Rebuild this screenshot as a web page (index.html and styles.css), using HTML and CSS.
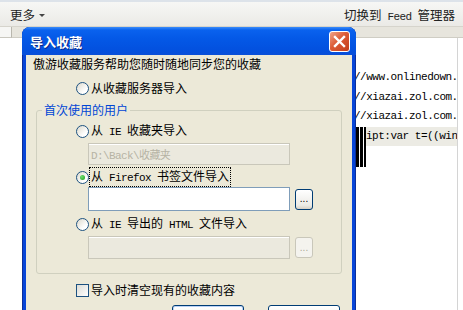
FILE: index.html
```html
<!DOCTYPE html>
<html>
<head>
    <title>导入收藏</title>
    <link rel="stylesheet" href="styles.css">
</head>
<body>
    <div class="toolbar">
        <span class="more">更多<i class="caret"></i></span>
        <span>切换到<span class="mono"> Feed </span>管理器</span>
    </div>

    <div class="strip">
        <div class="strip-box"></div>
        <div class="strip-rest"></div>
    </div>

    <div class="content">
        <div class="code">
            <div class="line">//www.onlinedown.</div>
            <div class="line">//xiazai.zol.com.</div>
            <div class="line">//xiazai.zol.com.</div>
            <div class="line current">ipt:var t=((win</div>
        </div>
        <div class="caret-bars"></div>
    </div>

    <div class="dialog">
        <div class="titlebar">
            <span class="title">导入收藏</span>
            <span class="close">
                <svg width="13" height="13" viewBox="0 0 13 13">
                    <path d="M2 2 L11 11 M11 2 L2 11" stroke="#fff" stroke-width="2.4" stroke-linecap="square"/>
                </svg>
            </span>
        </div>

        <div class="dlg-body">
            <div class="intro">傲游收藏服务帮助您随时随地同步您的收藏</div>

            <div class="opt top-opt">
                <span class="radio"></span>
                <span class="txt">从收藏服务器导入</span>
            </div>

            <fieldset>
                <legend>首次使用的用户</legend>

                <div class="opt first">
                    <span class="radio"></span>
                    <span class="txt">从<span class="mono"> IE </span>收藏夹导入</span>
                </div>
                <div class="field">
                    <input type="text" class="box off tall22" value="D:\Back\收藏夹" disabled>
                </div>

                <div class="opt gap3">
                    <span class="radio checked"></span>
                    <span class="txt focus">从<span class="mono"> Firefox </span>书签文件导入</span>
                </div>
                <div class="field gap1">
                    <input type="text" class="box">
                    <button class="browse">...</button>
                </div>

                <div class="opt gap4">
                    <span class="radio"></span>
                    <span class="txt">从<span class="mono"> IE </span>导出的<span class="mono"> HTML </span>文件导入</span>
                </div>
                <div class="field">
                    <input type="text" class="box off" disabled>
                    <button class="browse" disabled>...</button>
                </div>
            </fieldset>

            <div class="opt check-opt">
                <span class="check"></span>
                <span class="txt">导入时清空现有的收藏内容</span>
            </div>

            <div class="buttons">
                <button class="btn">确定</button>
                <button class="btn">取消</button>
            </div>
        </div>
    </div>
</body>
</html>
```

FILE: styles.css
```css
body { margin: 0; width: 463px; height: 310px; overflow: hidden; position: relative; background: #fff; font-family: "Noto Sans CJK SC", sans-serif; font-size: 12px; color: #000; }
.mono { font-family: "Liberation Mono", monospace; font-size: 11px; letter-spacing: -0.6px; white-space: pre; }

.toolbar { height: 24px; display: flex; align-items: center; justify-content: space-between; padding: 0 8px 0 10px; border-top: 2px solid #dde3ea; background: linear-gradient(#f7f7f5, #ebeae6); border-bottom: 1px solid #d6d4cc; color: #222; font-size: 12.5px; }
.more { display: flex; align-items: center; }
.caret { display: inline-block; margin-left: 4px; margin-top: 2px; border-left: 3px solid transparent; border-right: 3px solid transparent; border-top: 3px solid #444; }

.strip { height: 11px; display: flex; }
.strip-box { width: 11px; background: #f6f6f4; border-right: 1px solid #b9b7ae; border-bottom: 1px solid #c9c7be; }
.strip-rest { flex: 1; background: #e7e5dd; border-bottom: 1px solid #cfcdc4; }

.content { position: relative; height: 272px; }
.code { width: 104px; margin-left: 354px; height: 272px; padding-top: 30px; box-sizing: border-box; border-right: 1px solid #d4d4d4; overflow: hidden; font-family: "Liberation Mono", monospace; font-size: 11px; letter-spacing: -0.5px; }
.line { height: 19.5px; line-height: 19.5px; white-space: pre; }
.current { background: #ecebe4; margin-left: 2px; padding-left: 10px; }
.caret-bars { position: absolute; left: 356px; top: 89px; width: 10px; height: 40px; background: repeating-linear-gradient(90deg, #000 0, #000 3px, #fff 3px, #fff 4px); }

.dialog { position: absolute; left: 22px; top: 27px; width: 334px; height: 300px; background: #0846d8; border-radius: 8px 8px 0 0; box-shadow: inset 1px 0 #0a2f9c, inset -1px 0 #0a2f9c; }
.titlebar { height: 28px; display: flex; align-items: center; justify-content: space-between; padding: 0 6px 0 8px; border-radius: 8px 8px 0 0; background: linear-gradient(#3b8cf9 0, #0a62ee 3px, #0458e6 12px, #0350de 24px, #0a4fd8 28px); }
.title { color: #fff; font-weight: bold; font-size: 13px; text-shadow: 1px 1px #0a2a8a; }
.close { width: 19px; height: 19px; display: flex; align-items: center; justify-content: center; border: 1px solid #fff; border-radius: 3px; background: linear-gradient(135deg, #f0a48a, #dc5b36 45%, #c23d1a); }

.dlg-body { background: #ece9d8; margin: 0 4px; height: 272px; }
.intro { height: 18px; line-height: 18px; padding-left: 7px; }

.opt { display: flex; align-items: center; height: 18px; }
.top-opt { margin: 6px 0 0 50px; }
.check-opt { margin: 7px 0 0 50px; }
.txt { padding: 0 1px; border: 1px solid transparent; line-height: 16px; }
.focus { border: 1px dotted #000; }

.radio { width: 11px; height: 11px; border: 1px solid #1d5281; border-radius: 50%; background: linear-gradient(135deg, #dcd9cc, #fff 70%); position: relative; flex: none; }
.radio.checked::after { content: ""; position: absolute; left: 3px; top: 3px; width: 5px; height: 5px; border-radius: 50%; background: radial-gradient(circle at 35% 35%, #6fe06f, #1c9a1c); }
.check { width: 11px; height: 11px; border: 1px solid #1c5180; background: linear-gradient(135deg, #dcdcd6, #fff); flex: none; }

fieldset { margin: 5px 10px 0; padding: 4px 0 14px 5px; border: 1px solid #d0d0bf; border-radius: 3px; }
legend { padding: 0 2px; line-height: 16px; color: #0046d5; }
fieldset .opt { margin-left: 34px; }
.gap3 { margin-top: 3px; }
.gap4 { margin-top: 4px; }

.field { display: flex; align-items: center; gap: 5px; margin: 3px 0 0 46px; }
.field.gap1 { margin-top: 1px; }
.box { width: 202px; height: 23px; box-sizing: border-box; border: 1px solid #7f9db9; background: #fff; padding: 0 2px; font-family: "Liberation Mono", "Noto Sans CJK SC", monospace; font-size: 11px; letter-spacing: -0.6px; }
.gap1 .box { height: 24px; }
.box.off { background: #ebe9de; border-color: #c9c7ba; color: #b6b3a4; box-shadow: inset 0 1px #fff; }
.box.tall22 { height: 22px; }

.browse { width: 18px; height: 21px; padding: 0; border: 1px solid #003c74; border-radius: 3px; background: linear-gradient(#fff, #ecebe6 80%, #d6d0c5); font-size: 10px; color: #000; line-height: 10px; }
.browse:disabled { border-color: #c9c7ba; color: #aca899; background: #f4f3ee; }

.buttons { display: flex; justify-content: flex-end; gap: 24px; margin: 6px 12px 0 0; }
.btn { width: 72px; height: 23px; padding: 0; border: 1px solid #003c74; border-radius: 3px; background: linear-gradient(#fff, #f0f0ea 70%, #d6d0c5); font-family: "Noto Sans CJK SC", sans-serif; font-size: 12px; }
.btn:first-child { box-shadow: inset 0 0 0 1px #b9d1f6; }
```
